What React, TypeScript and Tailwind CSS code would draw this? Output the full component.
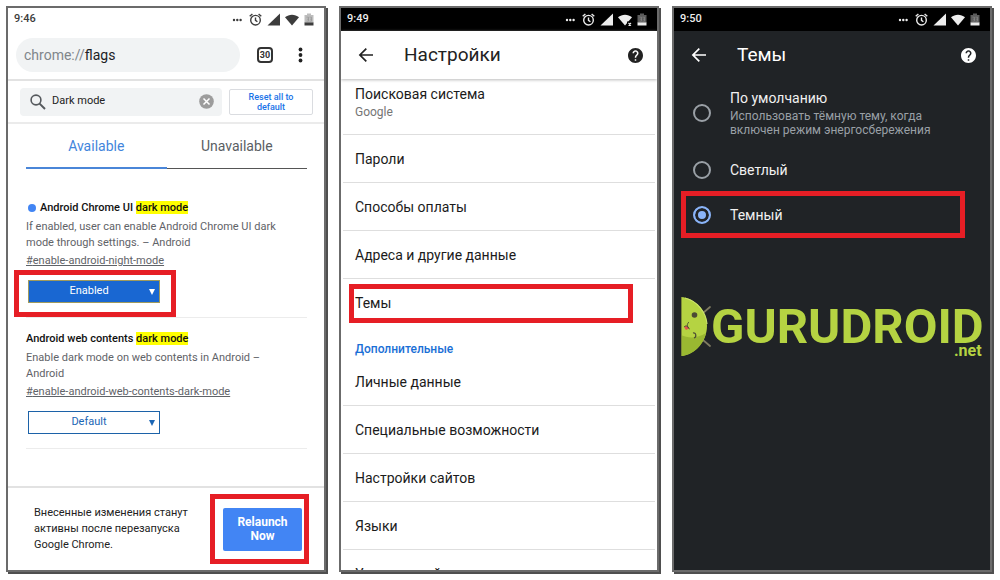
import { useState } from 'react';
import type { ReactNode } from 'react';

const FONT = "font-['Roboto','Noto_Sans',sans-serif]";

type StatusBarProps = {
  time: string;
  className: string;
  emptyColor: string;
  wifiAlert?: boolean;
};

const StatusBar = ({ time, className, emptyColor, wifiAlert }: StatusBarProps) => (
  <div className={`h-[23px] shrink-0 flex items-center justify-between pl-1.5 pr-2.5 text-[11px] font-medium ${className}`}>
    <span>{time}</span>
    <div className="flex items-center gap-[5px]">
      <svg className="mr-0.5" width="10" height="4" viewBox="0 0 10 4" fill="currentColor">
        <circle cx="2" cy="2" r="1.2" />
        <circle cx="5.3" cy="2" r="1.2" />
        <circle cx="8.6" cy="2" r="1.2" />
      </svg>
      <svg width="13" height="13" viewBox="0 0 13 13" fill="none" stroke="currentColor" strokeWidth="1.4">
        <circle cx="6.5" cy="7.2" r="4.8" />
        <path d="M6.5 4.4v3l1.9 1.4M.7 3.3 3.4 1M12.3 3.3 9.6 1" />
      </svg>
      <svg width="13" height="13" viewBox="0 0 13 13" fill="currentColor">
        <path d="M13 .5V12.500H.5z" />
      </svg>
      <svg width="14" height="12" viewBox="0 0 14 12" fill="currentColor">
        <path d="M0 3.200C4-.2 10-.2 14 3.200L7 11.600z" />
        {wifiAlert && (
          <>
            <path d="M9 7.500h5V12H9z" fill="#000" />
            <path d="m10.500 9 2.500 2.500M13 9l-2.500 2.500" stroke="currentColor" strokeWidth="1.1" />
          </>
        )}
      </svg>
      <svg width="10" height="13" viewBox="0 0 10 13" fill="currentColor">
        <path d="M3 .5h4V2h2.500v8H.5V2H3z" fill={emptyColor} />
        <path d="M.5 9.500h9v3h-9z" />
        <path d="M2.500 4.200h2v4h-2M3 6.200h1.500M5.500 4.200h2v4h-2M6 6.200h1.500" fill="none" stroke="currentColor" strokeWidth=".5" opacity=".4" />
      </svg>
    </div>
  </div>
);

const Phone = ({ className, children }: { className: string; children: ReactNode }) => (
  <section className={`flex-1 min-w-0 flex flex-col overflow-hidden border-2 border-[#6b6b6b] shadow-[2px_2px_0_#4f4f4f] ${className}`}>
    {children}
  </section>
);

// Red marker drawn over the control to tap
const Highlight = ({ className }: { className: string }) => (
  <span aria-hidden="true" className={`absolute pointer-events-none border-5 border-[#e61e25] ${className}`} />
);

const AppBar = ({ title, className }: { title: string; className: string }) => (
  <header className={`h-12 shrink-0 flex items-center pl-[17px] pr-3.5 ${className}`}>
    <button aria-label="Назад" className="cursor-pointer">
      <svg width="16" height="16" viewBox="0 0 16 16" fill="none" stroke="currentColor" strokeWidth="1.7">
        <path d="M15 8H2M8.300 1.600 1.900 8l6.400 6.400" />
      </svg>
    </button>
    <h1 className="flex-1 pl-[30px] text-[19px]">{title}</h1>
    <button aria-label="Справка" className="cursor-pointer">
      <svg width="15" height="15" viewBox="2 2 20 20" fill="currentColor">
        <path d="M12 2C6.480 2 2 6.480 2 12s4.480 10 10 10 10-4.480 10-10S17.520 2 12 2zm1 17h-2v-2h2v2zm2.070-7.750-.9.920C13.450 12.900 13 13.500 13 15h-2v-.5c0-1.100.45-2.100 1.170-2.830l1.240-1.260c.37-.36.59-.86.59-1.410 0-1.100-.9-2-2-2s-2 .9-2 2H8c0-2.210 1.790-4 4-4s4 1.790 4 4c0 .88-.36 1.680-.93 2.250z" />
      </svg>
    </button>
  </header>
);

type FlagProps = {
  id: string;
  title: string;
  description: string;
  initial: string;
  changed?: boolean;
};

const Flag = ({ id, title, description, initial, changed }: FlagProps) => {
  const [value, setValue] = useState(initial);

  return (
    <article className="pt-[13px] pb-3.5 border-b border-[#ececec]">
      <h3 className="flex items-center text-[11px] leading-4 font-medium text-[#111]">
        {changed && <span className="w-2 h-2 ml-0.5 mr-1 rounded-full bg-[#4285f4]" />}
        <label htmlFor={id}>
          {title} <mark className="bg-[#ffff00] text-inherit">dark mode</mark>
        </label>
      </h3>
      <p className="mt-[3px] pr-4 text-[11px] leading-4 text-[#5f6368]">{description}</p>
      <a href={`#${id}`} className="block mt-0.5 text-[11px] leading-4 text-[#5f6368] underline">#{id}</a>
      <div className="relative w-[132px] mt-[11px] ml-0.5">
        <select
          id={id}
          value={value}
          onChange={(e) => setValue(e.target.value)}
          className={`block w-full h-[23px] pr-2.5 appearance-none border text-[11px] [text-align-last:center] ${changed ? 'bg-[#1967d2] border-[#a09a5c] text-white' : 'bg-white border-[#1c62a8] text-[#1b66b5]'}`}
        >
          <option>Default</option>
          <option>Enabled</option>
          <option>Disabled</option>
        </select>
        <svg className={`absolute right-[5px] top-[9px] pointer-events-none ${changed ? 'text-white' : 'text-[#1b66b5]'}`} width="6" height="6" viewBox="0 0 6 6" fill="currentColor">
          <path d="M0 0h6L3 6z" />
        </svg>
        {changed && <Highlight className="-top-2.5 -left-3.5 -right-4 -bottom-3.5" />}
      </div>
    </article>
  );
};

const FlagsScreen = () => {
  const [query, setQuery] = useState('Dark mode');

  return (
    <Phone className="bg-white">
      <StatusBar time="9:46" className="text-[#3c3c3c]" emptyColor="#bdbdbd" />

      <div className="h-[50px] shrink-0 flex items-center pl-2 pr-[21px] border-b-2 border-[#e2e2e2]">
        <div className="flex-1 h-[34px] flex items-center px-2 rounded-full bg-[#f1f3f4] text-sm text-[#202124]">
          <span className="text-[#80868b]">chrome://</span>flags
        </div>
        <button className="w-4 h-4 ml-[17px] mr-[25px] flex items-center justify-center rounded-sm border-2 border-[#333] text-[9px] leading-3 font-bold text-[#333] cursor-pointer">30</button>
        <button aria-label="Меню" className="cursor-pointer">
          <svg width="5" height="16" viewBox="0 0 5 16" fill="#222">
            <circle cx="2.500" cy="2.500" r="1.900" />
            <circle cx="2.500" cy="8" r="1.900" />
            <circle cx="2.500" cy="13.500" r="1.900" />
          </svg>
        </button>
      </div>

      <div className="h-[43px] shrink-0 flex items-center gap-[7px] pl-3 pr-[11px] border-b-2 border-[#ebebeb]">
        <div className="flex-1 min-w-0 h-7 flex items-center pl-2.5 pr-2 rounded-sm bg-[#f1f3f4]">
          <svg width="16" height="16" viewBox="0 0 16 16" fill="none" stroke="#55595d" strokeWidth="1.600">
            <circle cx="6" cy="6" r="4.900" />
            <path d="m9.600 9.600 5.400 5.400" strokeWidth="2" />
          </svg>
          <input
            aria-label="Search flags"
            value={query}
            onChange={(e) => setQuery(e.target.value)}
            className="flex-1 min-w-0 pl-1.5 bg-transparent text-[11px] text-[#222] outline-none"
          />
          <button aria-label="Clear" onClick={() => setQuery('')} className="cursor-pointer">
            <svg width="15" height="15" viewBox="0 0 15 15">
              <circle cx="7.500" cy="7.500" r="7.300" fill="#9c9c9c" />
              <path d="m4.500 4.500 6 6M10.500 4.500l-6 6" stroke="#fff" strokeWidth="1.500" />
            </svg>
          </button>
        </div>
        <button className="w-[84px] h-[26px] rounded-xs border border-[#dadce0] text-[9px] leading-[10px] font-medium text-[#1a73e8] cursor-pointer">
          Reset all to<br />default
        </button>
      </div>

      <div className="pl-[18px] pr-[17px]">
        <div role="tablist" className="h-[45px] flex text-sm">
          <button role="tab" aria-selected="true" className="flex-1 border-b-2 border-[#4a86d8] text-[#4285dc] cursor-pointer">Available</button>
          <button role="tab" aria-selected="false" className="flex-1 border-b border-[#555] text-[#5a5e63] cursor-pointer">Unavailable</button>
        </div>
        <div className="pt-[18px]">
          <Flag
            id="enable-android-night-mode"
            title="Android Chrome UI"
            description="If enabled, user can enable Android Chrome UI dark mode through settings. – Android"
            initial="Enabled"
            changed
          />
          <Flag
            id="enable-android-web-contents-dark-mode"
            title="Android web contents"
            description="Enable dark mode on web contents in Android – Android"
            initial="Default"
          />
        </div>
      </div>

      <footer className="mt-auto h-[84px] shrink-0 flex items-center justify-between pl-[26px] pr-[22px] border-t-2 border-[#e2e2e2]">
        <p className="w-[165px] text-[11px] leading-4 text-[#222]">
          Внесенные изменения станут активны после перезапуска Google Chrome.
        </p>
        <div className="relative">
          <button className="block w-[79px] h-[43px] rounded-xs bg-[#4285f4] text-xs leading-[14px] font-bold text-white cursor-pointer">
            Relaunch<br />Now
          </button>
          <Highlight className="-top-3.5 -left-[13px] -right-[7px] -bottom-[13px]" />
        </div>
      </footer>
    </Phone>
  );
};

const Row = ({ label, last, children }: { label: string; last?: boolean; children?: ReactNode }) => (
  <button className={`relative h-12 shrink-0 px-3 text-left text-sm cursor-pointer ${last ? '' : 'border-b border-[#dedede]'}`}>
    {label}
    {children}
  </button>
);

const SettingsScreen = () => (
  <Phone className="bg-white text-[#1b1b1b]">
    <StatusBar time="9:49" className="bg-black text-[#ededed]" emptyColor="#5c5c5c" wifiAlert />
    <AppBar title="Настройки" className="text-[#222] shadow-[0_1px_3px_#bbb]" />
    <div className="flex-1 min-h-0 flex flex-col overflow-hidden px-0.5 pt-1.5">
      <button className="shrink-0 px-3 pb-[13px] text-left border-b border-[#dedede] cursor-pointer">
        <span className="block text-sm leading-[18px]">Поисковая система</span>
        <span className="block text-xs leading-[18px] text-[#757575]">Google</span>
      </button>
      <Row label="Пароли" />
      <Row label="Способы оплаты" />
      <Row label="Адреса и другие данные" />
      <Row label="Темы" last>
        <Highlight className="top-[5px] left-1.5 right-[22px] bottom-1" />
      </Row>
      <h2 className="shrink-0 px-3 pt-[13px] text-xs leading-[18px] font-medium text-[#1a6fd6]">Дополнительные</h2>
      <Row label="Личные данные" />
      <Row label="Специальные возможности" />
      <Row label="Настройки сайтов" />
      <Row label="Языки" />
      <Row label="Упрощенный режим" last />
    </div>
  </Phone>
);

const themes = [
  {
    value: 'system',
    label: 'По умолчанию',
    hint: 'Использовать тёмную тему, когда включен режим энергосбережения',
    row: 'h-[68px]',
  },
  { value: 'light', label: 'Светлый', row: 'h-[45px]' },
  { value: 'dark', label: 'Темный', row: 'h-[46px]', marked: true },
];

const Logo = () => (
  <div className="flex items-start ml-[7px] mt-[59px] text-[#b5d342]">
    <svg className="shrink-0" width="30" height="59" viewBox="0 0 30 59">
      <path d="m22 16 7-6M22 43l7 6" stroke="#7f7b62" strokeWidth="1.700" strokeLinecap="round" />
      <path d="M0 0c14 1 26 14 26 29S14 58 0 59z" fill="#b5d342" />
      <path d="M0 38c8 4 17 3 25-2C22 49 12 58 0 59z" fill="#9ab831" />
      <path d="M4 1c12 3 21 14 22 26" fill="none" stroke="#cbe36b" strokeWidth="1.200" />
      <path d="M.5 0v59" stroke="#7d8b35" />
      <circle cx="13.500" cy="18" r="2.800" fill="#4b4a35" />
      <path d="M12 36c3-1 4 4 1 5" fill="none" stroke="#4b4a35" strokeWidth="1.200" />
      <path d="M3 30c2-2 4-1 5 1.500L5 33z" fill="#e2574c" />
      <path d="M8 25c-2.500 2-2 5 .5 7M3 30c2-2 4-1 5 1.500" fill="none" stroke="#4b4a35" strokeWidth="1" />
    </svg>
    <div className="pt-[11px] font-bold">
      <div className="text-[49px] leading-[37px]">GURUDROID</div>
      <div className="pr-0.5 text-right text-base leading-3">.net</div>
    </div>
  </div>
);

const ThemesScreen = () => {
  const [theme, setTheme] = useState('dark');

  return (
    <Phone className="bg-[#202326] text-[#f1f1f1]">
      <StatusBar time="9:50" className="bg-black text-[#ededed]" emptyColor="#5c5c5c" />
      <AppBar title="Темы" className="text-white" />
      <div role="radiogroup" aria-label="Темы">
        {themes.map((item) => (
          <label key={item.value} className={`relative flex items-center gap-[19px] pl-[19px] pr-10 cursor-pointer ${item.row}`}>
            <input
              type="radio"
              name="theme"
              value={item.value}
              checked={theme === item.value}
              onChange={() => setTheme(item.value)}
              className="shrink-0 w-[18px] h-[18px] appearance-none rounded-full border-2 border-[#9aa0a6] checked:border-[#8ab4f8] checked:bg-[#8ab4f8] checked:shadow-[inset_0_0_0_3px_#202326]"
            />
            <span>
              <span className="block text-sm leading-[18px]">{item.label}</span>
              {item.hint && <span className="block mt-0.5 text-xs leading-[14px] text-[#9aa0a6]">{item.hint}</span>}
            </span>
            {item.marked && <Highlight className="-top-px left-[7px] right-[25px] bottom-0" />}
          </label>
        ))}
      </div>
      <Logo />
    </Phone>
  );
};

const App = () => (
  <main className={`h-screen flex gap-[13px] pt-1.5 pb-2 pl-1.5 pr-2 bg-white ${FONT}`}>
    <FlagsScreen />
    <SettingsScreen />
    <ThemesScreen />
  </main>
);

export default App;
